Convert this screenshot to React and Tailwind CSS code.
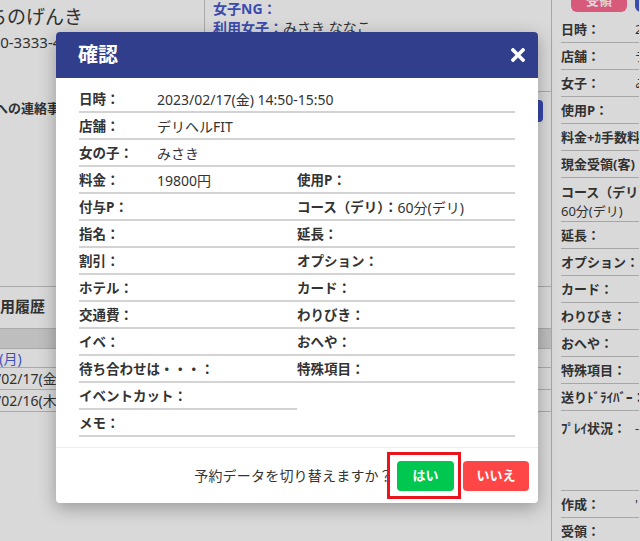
import React from "react";

const fullRows = [
  ["日時：", "2023/02/17(金) 14:50-15:50"],
  ["店舗：", "デリヘルFIT"],
  ["女の子：", "みさき"],
];

const pairRows = [
  [["料金：", "19800円"], ["使用P：", ""]],
  [["付与P：", ""], ["コース（デリ）：", "60分(デリ)"]],
  [["指名：", ""], ["延長：", ""]],
  [["割引：", ""], ["オプション：", ""]],
  [["ホテル：", ""], ["カード：", ""]],
  [["交通費：", ""], ["わりびき：", ""]],
  [["イベ：", ""], ["おへや：", ""]],
  [["待ち合わせは・・・：", ""], ["特殊項目：", ""]],
  [["イベントカット：", ""], null],
];

const sideRows = [
  { label: "日時：", value: "2023/02/17(金)" },
  { label: "店舗：", value: "デリヘルFIT" },
  { label: "女子：", value: "みさき" },
  { label: "使用P：", value: "" },
  { label: "料金+ｶ手数料：", value: "" },
  { label: "現金受領(客)：", value: "" },
];

const sideRows2 = ["延長：", "オプション：", "カード：", "わりびき：", "おへや：", "特殊項目：", "送りﾄﾞﾗｲﾊﾞｰ："];

// the page behind the dialog
const BackPage = () => (
  <div className="flex h-[541px] overflow-hidden bg-white text-[#3a3a3a]">
    <div className="w-[552px] shrink-0 border-r border-[#c4c4c4]">
      <div className="flex h-[287px] border-b border-[#c7c7c7]">
        {/* customer column */}
        <div className="w-[205px] shrink-0 overflow-hidden border-r border-[#c7c7c7]">
          <div className="-ml-[12px] mt-[4px] whitespace-nowrap text-[19px] leading-[26px]">ちのげんき</div>
          <div className="-ml-[17px] mt-[2px] whitespace-nowrap text-[15px] leading-[20px]">090-3333-4444</div>
          <div className="-ml-[31px] mt-[47px] whitespace-nowrap text-[13px] font-bold leading-[18px]">女子への連絡事項</div>
        </div>
        {/* reservation column */}
        <div className="flex flex-1 flex-col">
          <div className="h-[92px] border-b border-[#c7c7c7] pl-[8px] text-[14px] leading-[19px]">
            <div className="-mt-[1px] font-bold text-[#4659cf]">女子NG：</div>
            <div>
              <span className="font-bold text-[#4659cf]">利用女子：</span>みさき ななこ
            </div>
          </div>
          <div className="mt-[8px] flex justify-end pr-[8px]">
            <div className="h-[22px] w-[60px] rounded bg-[#4053c6]"></div>
          </div>
        </div>
      </div>
      {/* history */}
      <div className="h-[41px] overflow-hidden">
        <div className="-ml-[15px] whitespace-nowrap pt-[9px] text-[15px] font-bold leading-[20px]">利用履歴</div>
      </div>
      <div className="h-[21px] border-y border-[#c7c7c7] bg-[#e0e0e0]"></div>
      <div className="flex h-[19px] items-center overflow-hidden border-b border-[#c7c7c7] text-[14px]">
        <span className="-ml-[38px] whitespace-nowrap text-[#4a5fe0]">02/20(月)</span>
      </div>
      <div className="flex h-[22px] items-center overflow-hidden border-b border-[#c7c7c7] text-[14px]">
        <span className="-ml-[36px] whitespace-nowrap">2023/02/17(金)</span>
      </div>
      <div className="flex h-[22px] items-center overflow-hidden border-b border-[#c7c7c7] text-[14px]">
        <span className="-ml-[36px] whitespace-nowrap">2023/02/16(木)</span>
      </div>
    </div>

    {/* right detail column */}
    <div className="w-[87px] shrink-0 overflow-hidden pl-[9px] text-[13px]">
      <div className="flex h-[16px] w-[200px]">
        <div className="-mt-[18px] ml-[10px] flex h-[30px] w-[56px] shrink-0 items-end justify-center rounded-md bg-[#fd6a91] pb-[2px] font-bold text-white">受領</div>
        <div className="-mt-[18px] ml-[8px] h-[30px] w-[40px] shrink-0 rounded-md bg-[#4659cf]"></div>
      </div>
      {sideRows.map((r) => (
        <div key={r.label} className="flex h-[27px] items-center whitespace-nowrap border-b border-[#c4c4c4] pt-[2px]">
          <span className="w-[74px] shrink-0 font-bold">{r.label}</span>
          <span>{r.value}</span>
        </div>
      ))}
      <div className="h-[44px] whitespace-nowrap border-b border-[#c4c4c4] pt-[5px] leading-[19px]">
        <div className="font-bold">コース（デリ）：</div>
        <div>60分(デリ)</div>
      </div>
      {sideRows2.map((l) => (
        <div key={l} className="flex h-[27px] items-center whitespace-nowrap border-b border-[#c4c4c4] pt-[2px]">
          <span className="font-bold">{l}</span>
        </div>
      ))}
      <div className="flex h-[80px] whitespace-nowrap border-b border-[#c4c4c4] pt-[8px]">
        <span className="w-[74px] shrink-0 font-bold">ﾌﾟﾚｲ状況：</span>
        <span>-</span>
      </div>
      <div className="flex h-[27px] items-center whitespace-nowrap border-b border-[#c4c4c4] pt-[2px]">
        <span className="w-[74px] shrink-0 font-bold">作成：</span>
        <span>'</span>
      </div>
      <div className="flex h-[27px] items-center whitespace-nowrap border-b border-[#c4c4c4] pt-[2px]">
        <span className="w-[74px] shrink-0 font-bold">受領：</span>
      </div>
    </div>
  </div>
);

const Cell = ({ label, value, fixed }) => (
  <div className="flex h-[27px] items-center whitespace-nowrap border-b-2 border-[#d3d3d3] pt-[1px]">
    <span className={fixed ? "min-w-[78px] text-[13.5px] font-bold" : "text-[13.5px] font-bold"}>{label}</span>
    <span className="text-[14px]">{value}</span>
  </div>
);

export default function App() {
  return (
    <div className="relative h-[541px] w-[640px] overflow-hidden font-['Noto_Sans','Noto_Sans_CJK_JP',sans-serif]">
      <BackPage />
      <div className="absolute inset-0 bg-black/15"></div>

      {/* confirm dialog */}
      <div className="absolute left-[56px] top-[32px] w-[482px] rounded-[4px] bg-white text-[#333] shadow-[0_5px_18px_rgba(0,0,0,0.3)]">
        <div className="flex h-[46px] items-center justify-between rounded-t-[4px] bg-[#303e8c] pl-[22px] pr-[13px]">
          <span className="text-[20px] font-bold text-white">確認</span>
          <svg width="14" height="14" viewBox="0 0 14 14" className="text-white">
            <path d="M2 2 L12 12 M12 2 L2 12" stroke="currentColor" strokeWidth="3.6" strokeLinecap="square" />
          </svg>
        </div>

        <div className="px-[23px] pb-[10px] pt-[8px]">
          {fullRows.map(([l, v]) => (
            <Cell key={l} label={l} value={v} fixed />
          ))}
          <div className="grid grid-cols-2">
            {pairRows.map(([a, b], i) => (
              <React.Fragment key={i}>
                <Cell label={a[0]} value={a[1]} fixed />
                {b ? <Cell label={b[0]} value={b[1]} /> : <div className="h-[27px]"></div>}
              </React.Fragment>
            ))}
          </div>
          <Cell label="メモ：" value="" fixed />
        </div>

        <div className="flex h-[56px] items-center justify-end border-t border-[#ececec] pr-[9px]">
          <span className="mr-[4px] text-[14px] tracking-[0.2px] text-[#333]">予約データを切り替えますか？</span>
          <div className="relative">
            <button className="h-[30px] w-[57px] rounded-[4px] bg-[#00c74f] text-[13px] font-bold text-white">はい</button>
            <div className="absolute -bottom-[8px] -left-[10px] -right-[7px] -top-[9px] border-[3px] border-[#e8141e]"></div>
          </div>
          <button className="ml-[9px] h-[30px] w-[66px] rounded-[4px] bg-[#ff4646] text-[13px] font-bold text-white">いいえ</button>
        </div>
      </div>
    </div>
  );
}
